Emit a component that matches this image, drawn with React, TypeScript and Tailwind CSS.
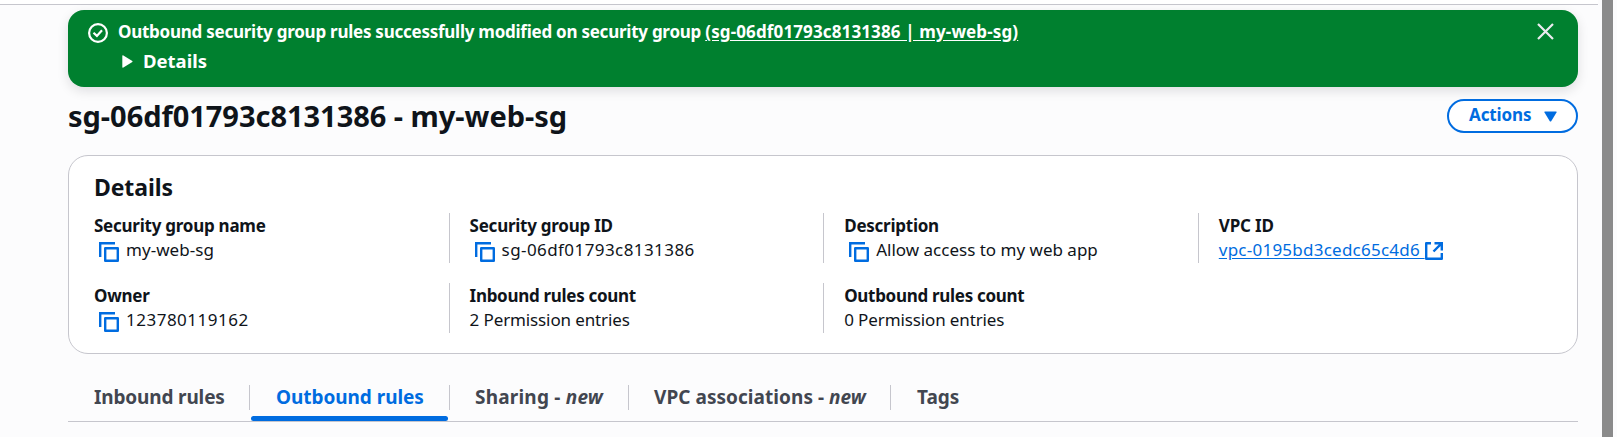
import type { ReactNode } from "react";

function CopyIcon() {
  return (
    <svg className="mt-[4px] ml-[5px] mr-[7px] h-5 w-5 shrink-0" viewBox="0 0 20 20" fill="none" stroke="#006ce0" strokeWidth="2.4">
      <path d="M1.2 15V1.2H16" />
      <rect x="6.2" y="6.2" width="12.6" height="12.6" strokeLinejoin="round" />
    </svg>
  );
}

function ExternalIcon() {
  return (
    <svg className="mt-[4px] h-[18px] w-[18px] shrink-0" viewBox="0 0 18 18" fill="none" stroke="#006ce0" strokeWidth="2.4">
      <path d="M6 1.2H1.2V16.8H16.8V11" strokeLinejoin="round" />
      <path d="M9.5 1.2H16.8V8.5M16.8 1.2L8.5 9.5" />
    </svg>
  );
}

function Cell({ label, tracking, divider, children }: { label: string; tracking: string; divider?: boolean; children: ReactNode }) {
  return (
    <div className={"h-[50px] w-[374.6px] shrink-0 " + (divider ? "border-l border-[#c6c6cd] pl-5" : "pl-5")}>
      <div className={"h-[25px] text-[17px] font-bold leading-[25px] " + tracking}>{label}</div>
      <div className="flex h-[25px] text-[17px] leading-[24px]">{children}</div>
    </div>
  );
}

function Tab({ width, children }: { width: string; children: ReactNode }) {
  return <div className={"flex h-[25px] shrink-0 items-center border-r border-[#c6c6cd] " + width}>{children}</div>;
}

export default function App() {
  return (
    <div className="flex h-[437px] w-[1617px] overflow-hidden whitespace-nowrap bg-[#fcfcfd] font-['Noto_Sans','Open_Sans',sans-serif] text-[#0f141a]">
      <div className="w-[1602px] shrink-0">
        <div className="h-[5px] w-[1598px] border-b border-[#c6c6cd] bg-white" />
        <main className="ml-[68px] w-[1510px] pt-[5px]">
          <section className="flex h-[77px] rounded-2xl bg-[#00802f] pl-5 pr-6 text-white shadow-[0_4px_12px_rgba(0,7,22,0.12)]">
            <svg className="mt-[13px] h-5 w-5 shrink-0" viewBox="0 0 20 20" fill="none" stroke="#fff" strokeWidth="2.2">
              <circle cx="10" cy="10" r="8.9" />
              <path d="M5.5 9.8L8.9 12.9L14 7.2" />
            </svg>
            <div className="ml-[10px] pt-[9px] font-bold">
              <div className="h-[26px] text-[17px] leading-[25px]">
                <span className="tracking-[-0.25px]">Outbound security group rules successfully modified on security group </span>
                <span className="tracking-[0.13px] underline underline-offset-2">(sg-06df01793c8131386 | my-web-sg)</span>
              </div>
              <div className="flex h-[32px] items-center">
                <svg className="ml-1 h-[13px] w-[11px]" viewBox="0 0 11 13" fill="#fff">
                  <path d="M1 .3L10.3 6Q10.8 6.5 10.3 7L1 12.7Q.3 12.9 .3 12V1Q.3 .1 1 .3Z" />
                </svg>
                <span className="ml-[10px] text-[18.5px] leading-[24px]">Details</span>
              </div>
            </div>
            <svg className="ml-auto mt-[13px] h-[17px] w-[17px]" viewBox="0 0 17 17" fill="none" stroke="#ebebf0" strokeWidth="2.2">
              <path d="M1 1L16 16M16 1L1 16" />
            </svg>
          </section>

          <header className="mt-[12px] flex h-[34px] items-center justify-between">
            <h1 className="text-[29px] font-bold leading-[34px] tracking-[-0.03px]">sg-06df01793c8131386 - my-web-sg</h1>
            <button className="flex h-[34px] w-[131px] items-center rounded-full border-2 border-[#006ce0] bg-white pl-5 text-[17px] font-bold leading-[24px] text-[#006ce0]">
              <span className="-mt-[2px] tracking-[-0.1px]">Actions</span>
              <svg className="ml-[12px] h-[11px] w-[13px]" viewBox="0 0 13 11" fill="#006ce0">
                <path d="M1 .5H12Q13 .5 12.5 1.5L7.2 10.2Q6.5 11 5.8 10.2L.5 1.5Q0 .5 1 .5Z" />
              </svg>
            </button>
          </header>

          <section className="mt-[22px] h-[199px] rounded-[20px] border border-[#c6c6cd] bg-white pl-[5px] pt-[15px]">
            <h2 className="ml-[20px] h-[32px] text-[23px] font-bold leading-[32px] tracking-[-0.1px]">Details</h2>
            <div className="mt-[10px] flex">
              <Cell label="Security group name" tracking="tracking-[-0.25px]">
                <CopyIcon />
                <span className="tracking-[0.05px]">my-web-sg</span>
              </Cell>
              <Cell label="Security group ID" tracking="tracking-[-0.25px]" divider>
                <CopyIcon />
                <span className="tracking-[0.42px]">sg-06df01793c8131386</span>
              </Cell>
              <Cell label="Description" tracking="tracking-[-0.25px]" divider>
                <CopyIcon />
                <span>Allow access to my web app</span>
              </Cell>
              <Cell label="VPC ID" tracking="tracking-[-0.15px]" divider>
                <a className="whitespace-pre tracking-[0.24px] text-[#006ce0] underline underline-offset-2">{"vpc-0195bd3cedc65c4d6 "}</a>
                <ExternalIcon />
              </Cell>
            </div>
            <div className="mt-5 flex">
              <Cell label="Owner" tracking="tracking-[-0.25px]">
                <CopyIcon />
                <span className="tracking-[0.5px]">123780119162</span>
              </Cell>
              <Cell label="Inbound rules count" tracking="tracking-[-0.3px]" divider>
                <span className="tracking-[-0.12px]">2 Permission entries</span>
              </Cell>
              <Cell label="Outbound rules count" tracking="tracking-[-0.3px]" divider>
                <span className="tracking-[-0.12px]">0 Permission entries</span>
              </Cell>
            </div>
          </section>

          <nav className="mt-[31px] flex h-[37px] border-b border-[#c6c6cd] text-[19px] font-bold text-[#424650]">
            <Tab width="w-[182px] pl-[26px]">
              <span className="tracking-[-0.15px]">Inbound rules</span>
            </Tab>
            <div className="flex w-[200px] shrink-0 flex-col">
              <div className="flex h-[25px] items-center border-r border-[#c6c6cd] pl-[26px] text-[#006ce0]">
                <span className="tracking-[-0.05px]">Outbound rules</span>
              </div>
              <div className="ml-[1px] mt-[6px] h-[5px] w-[197px] shrink-0 rounded-full bg-[#006ce0]" />
            </div>
            <Tab width="w-[179px] pl-[25px]">
              <span className="tracking-[0.2px]">Sharing - <em>new</em></span>
            </Tab>
            <Tab width="w-[262px] pl-[25px]">
              <span className="tracking-[0.05px]">VPC associations - <em>new</em></span>
            </Tab>
            <div className="flex h-[25px] items-center pl-[26px]">Tags</div>
          </nav>
        </main>
      </div>
      <div className="h-full w-[11px] shrink-0 bg-[#8b8b8b]" />
    </div>
  );
}
